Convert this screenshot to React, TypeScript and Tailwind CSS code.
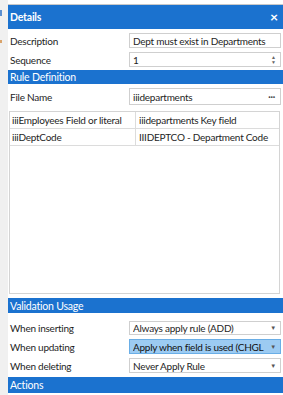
import React from "react";

const font = { fontFamily: 'Lato, "Noto Sans", sans-serif' };

function Bar({ title, bold, close }: { title: string; bold?: boolean; close?: boolean }) {
  return (
    <div className="flex h-full items-center justify-between bg-[#1b72cf] pl-[2px] pr-[5px] text-[10.5px] leading-[14px] tracking-[-0.2px] text-white">
      <span className={bold ? "font-bold" : ""}>{title}</span>
      {close && <span className="text-[14px] font-bold leading-none">×</span>}
    </div>
  );
}

function Row({ label, children, h }: { label: string; children: React.ReactNode; h: string }) {
  return (
    <div className={`flex items-center ${h}`}>
      <div className="w-[121px] whitespace-nowrap pl-[2px] text-[10px] leading-[14px] tracking-[-0.25px] text-[#1e1e1e]">{label}</div>
      {children}
    </div>
  );
}

function Select({ value, active }: { value: string; active?: boolean }) {
  return (
    <div
      className={
        "flex h-full w-[152px] items-center justify-between overflow-hidden border pl-[3px] pr-[4px] text-[10px] leading-[14px] tracking-[-0.25px] " +
        (active ? "border-[#6aaee6] bg-[#9ccbf2] text-[#111]" : "border-[#cfcfcf] bg-white text-[#1e1e1e]")
      }
    >
      <span className="min-w-0 flex-1 overflow-hidden whitespace-nowrap">{value}</span>
      <span className="ml-[3px] text-[6px] leading-none text-[#555]">▼</span>
    </div>
  );
}

export default function App() {
  return (
    <div className="flex h-[395px] w-[283px] overflow-hidden bg-white" style={font}>
      <div className="relative w-[8px] shrink-0 bg-[#f0f0f0]">
        <div className="absolute left-0 top-[10px] h-[6px] w-[2px] bg-[#5b8fd0]" />
        <div className="absolute left-0 top-[40px] h-[3px] w-[2px] bg-[#d9a36b]" />
      </div>
      <div className="flex flex-1 flex-col">
        <div className="h-[5px] shrink-0 border-b border-[#c8c8c8] bg-white" />
        <div className="h-[24px] shrink-0">
          <Bar title="Details" bold close />
        </div>
        <div className="mt-[4px] flex flex-col gap-[4px]">
          <Row label="Description" h="h-[15px]">
            <div className="flex h-full w-[152px] items-center whitespace-nowrap border border-[#cfcfcf] pl-[3px] text-[10px] leading-[14px] tracking-[-0.25px] text-[#1e1e1e]">
              Dept must exist in Departments
            </div>
          </Row>
          <Row label="Sequence" h="h-[15px]">
            <div className="flex h-full w-[152px] items-center justify-between border border-[#cfcfcf] pl-[3px] pr-[4px] text-[10px] leading-[14px] text-[#1e1e1e]">
              <span>1</span>
              <span className="flex flex-col text-[5px] leading-[5px] text-[#666]">
                <span>▲</span>
                <span>▼</span>
              </span>
            </div>
          </Row>
        </div>
        <div className="mt-[3px] h-[14px] shrink-0">
          <Bar title="Rule Definition" />
        </div>
        <div className="mt-[4px]">
          <Row label="File Name" h="h-[17px]">
            <div className="flex h-full w-[152px] items-center justify-between border border-[#cfcfcf] pl-[3px] pr-[5px] text-[10px] leading-[14px] tracking-[-0.25px] text-[#1e1e1e]">
              <span>iiidepartments</span>
              <span className="text-[9px] font-bold leading-none text-[#444]">···</span>
            </div>
          </Row>
        </div>
        <div className="ml-[1px] mt-[6px] h-[183px] w-[271px] shrink-0 border border-[#d4d4d4] text-[10px] tracking-[-0.25px] text-[#1e1e1e]">
          <div className="flex h-[17px] border-b border-[#dcdcdc]">
            <div className="w-[126px] whitespace-nowrap border-r border-[#dcdcdc] pl-[2px] leading-[16px]">iiiEmployees Field or literal</div>
            <div className="flex-1 whitespace-nowrap pl-[3px] leading-[16px]">iiidepartments Key field</div>
          </div>
          <div className="flex h-[17px] border-b border-[#dcdcdc]">
            <div className="w-[126px] whitespace-nowrap border-r border-[#dcdcdc] pl-[2px] leading-[16px]">iiiDeptCode</div>
            <div className="flex-1 whitespace-nowrap pl-[3px] leading-[16px]">IIIDEPTCO - Department Code</div>
          </div>
        </div>
        <div className="mt-[4px] h-[15px] shrink-0">
          <Bar title="Validation Usage" />
        </div>
        <div className="mt-[8px] flex flex-col gap-[4px]">
          <Row label="When inserting" h="h-[14px]">
            <Select value="Always apply rule (ADD)" />
          </Row>
          <Row label="When updating" h="h-[15px]">
            <Select value="Apply when field is used (CHGL" active />
          </Row>
          <Row label="When deleting" h="h-[15px]">
            <Select value="Never Apply Rule" />
          </Row>
        </div>
        <div className="mt-[4px] h-[16px] shrink-0">
          <Bar title="Actions" />
        </div>
        <div className="flex-1 bg-white" />
      </div>
    </div>
  );
}
